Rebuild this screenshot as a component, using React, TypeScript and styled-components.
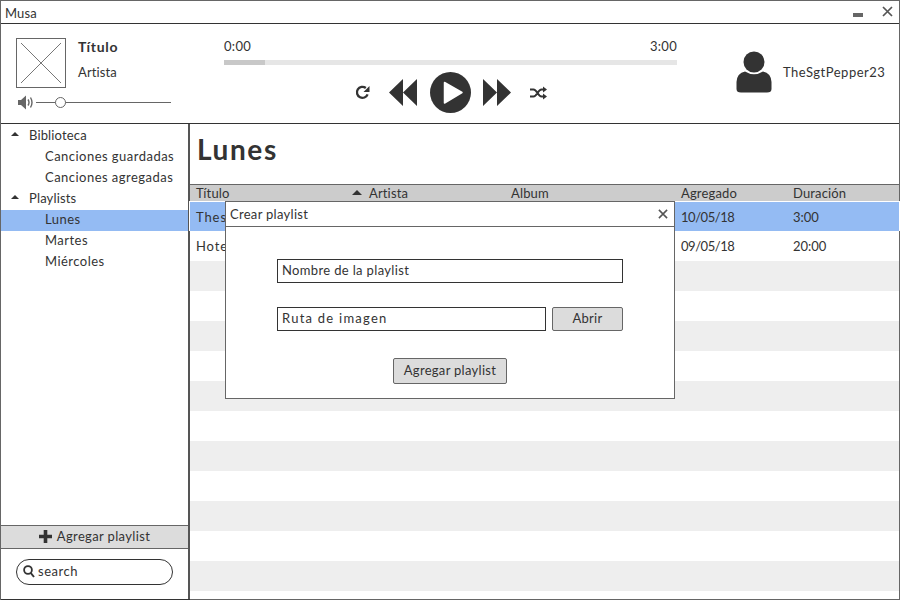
import styled, { createGlobalStyle } from "styled-components";

const GlobalStyle = createGlobalStyle`
  html, body {
    margin: 0;
    padding: 0;
    background: #fff;
  }
  * {
    box-sizing: border-box;
  }
`;

const Window = styled.div`
  width: 900px;
  height: 600px;
  position: relative;
  display: flex;
  flex-direction: column;
  border: 1px solid #666;
  font-family: "Lato", "Noto Sans", sans-serif;
  font-size: 13px;
  letter-spacing: 0.5px;
  color: #333;
  background: #fff;
`;

const TitleBar = styled.div`
  height: 23px;
  flex: none;
  display: flex;
  align-items: center;
  justify-content: space-between;
  padding: 2px 6px 0 4px;
  border-bottom: 1px solid #333;
`;

const AppName = styled.span`
  letter-spacing: 0.1px;
`;

const WindowActions = styled.div`
  display: flex;
  align-items: flex-start;
  gap: 19px;
  margin-top: -3px;
`;

const Minimize = styled.div`
  width: 10px;
  height: 4px;
  margin-top: 7px;
  background: #666;
`;

const Player = styled.div`
  height: 100px;
  flex: none;
  display: flex;
  border-bottom: 1px solid #333;
`;

const TrackPanel = styled.div`
  width: 223px;
  flex: none;
  padding: 14px 0 0 15px;
`;

const TrackInfo = styled.div`
  display: flex;
  gap: 12px;
`;

const Cover = styled.svg`
  display: block;
  width: 50px;
  height: 50px;
`;

const TrackText = styled.div`
  display: flex;
  flex-direction: column;
  gap: 9px;
`;

const TrackTitle = styled.div`
  font-size: 14px;
  line-height: 17px;
  font-weight: 700;
  letter-spacing: 0.7px;
`;

const TrackArtist = styled.div`
  line-height: 16px;
  letter-spacing: 0.1px;
`;

const Volume = styled.div`
  display: flex;
  align-items: center;
  gap: 2px;
  margin: 7px 0 0 2px;
`;

const Slider = styled.div`
  position: relative;
  width: 135px;
  height: 1px;
  background: #666;
`;

const SliderKnob = styled.div`
  position: absolute;
  left: 19px;
  top: -5px;
  width: 11px;
  height: 11px;
  border-radius: 50%;
  border: 1px solid #666;
  background: #fff;
`;

const Transport = styled.div`
  width: 453px;
  flex: none;
  padding-top: 13px;
`;

const Times = styled.div`
  display: flex;
  justify-content: space-between;
  line-height: 18px;
  letter-spacing: 0.3px;
`;

const Progress = styled.div`
  height: 5px;
  margin-top: 5px;
  background: #e6e6e6;
`;

const ProgressFill = styled.div`
  height: 100%;
  background: #c8c8c8;
`;

const Controls = styled.div`
  display: flex;
  align-items: center;
  margin-top: 7px;
  padding-left: 131px;
  height: 41px;
`;

const ControlItem = styled.span<{ $after?: number }>`
  display: flex;
  margin-right: ${(props) => props.$after ?? 0}px;
`;

const UserPanel = styled.div`
  flex: 1;
  display: flex;
  align-items: center;
  gap: 11px;
  padding: 0 0 4px 59px;
`;

const UserName = styled.span`
  letter-spacing: 0.5px;
`;

const Body = styled.div`
  flex: 1;
  display: flex;
  min-height: 0;
`;

const Sidebar = styled.aside`
  width: 189px;
  flex: none;
  display: flex;
  flex-direction: column;
  border-right: 2px solid #555;
  box-shadow: 0 1px 0 #333;
`;

const Tree = styled.div`
  flex: 1;
  padding-top: 2px;
`;

type TreeRowProps = {
  $level: number;
  $selected?: boolean;
};

const TreeRow = styled.div<TreeRowProps>`
  height: 21px;
  display: flex;
  align-items: center;
  padding-left: ${(props) => (props.$level === 0 ? 10 : 44)}px;
  padding-bottom: 3px;
  letter-spacing: ${(props) => (props.$level === 0 ? 0.15 : 0.47)}px;
  background: ${(props) => (props.$selected ? "#94bbf3" : "transparent")};
`;

const Caret = styled.span`
  width: 0;
  height: 0;
  margin-right: 10px;
  margin-bottom: 2px;
  border-left: 4px solid transparent;
  border-right: 4px solid transparent;
  border-bottom: 4px solid #333;
`;

const AddButton = styled.div`
  height: 24px;
  flex: none;
  display: flex;
  align-items: center;
  justify-content: center;
  gap: 5px;
  padding-bottom: 2px;
  letter-spacing: 0.35px;
  background: #dcdcdc;
  border-top: 1px solid #666;
  border-bottom: 1px solid #666;
`;

const SearchArea = styled.div`
  height: 50px;
  flex: none;
  padding: 10px 15px 0;
`;

const SearchBox = styled.div`
  width: 157px;
  height: 26px;
  display: flex;
  align-items: center;
  gap: 3px;
  padding: 0 0 2px 6px;
  border: 1px solid #333;
  border-radius: 13px;
`;

const Main = styled.main`
  flex: 1;
  min-width: 0;
  display: flex;
  flex-direction: column;
`;

const PageTitle = styled.h1`
  height: 60px;
  flex: none;
  margin: 0;
  padding: 8px 0 0 7px;
  font-size: 28px;
  line-height: 34px;
  font-weight: 700;
  letter-spacing: 1.6px;
  color: #333;
`;

const TableHeader = styled.div`
  height: 17px;
  flex: none;
  display: grid;
  grid-template-columns: 156px 159px 170px 112px 1fr;
  align-items: center;
  padding-left: 6px;
  letter-spacing: 0.15px;
  background: #ccc;
  border-top: 1px solid #666;
`;

const HeaderCell = styled.div`
  display: flex;
  align-items: center;
  line-height: 16px;
`;

const SortCell = styled(HeaderCell)`
  gap: 7px;
`;

const HeaderCaret = styled(Caret)`
  margin: 0 0 2px;
  border-left-width: 5px;
  border-right-width: 5px;
  border-bottom-width: 5px;
`;

const Rows = styled.div`
  flex: 1;
`;

type TableRowProps = {
  $tone: "selected" | "plain" | "shade";
};

const rowColors = {
  selected: "#94bbf3",
  plain: "#fff",
  shade: "#eee",
};

const TableRow = styled.div<TableRowProps>`
  position: relative;
  height: 30px;
  display: grid;
  grid-template-columns: 485px 112px 1fr;
  align-items: center;
  padding-left: 6px;
  background: ${(props) => rowColors[props.$tone]};
  border-top: ${(props) => (props.$tone === "selected" ? "1px solid #fff" : "0")};
  box-shadow: ${(props) => (props.$tone === "selected" ? "-1px 0 0 #fff, 1px 0 0 #fff" : "none")};
`;

const SongCell = styled.span`
  letter-spacing: 0.9px;
`;

const DateCell = styled.span`
  letter-spacing: -0.45px;
`;

const TimeCell = styled.span`
  letter-spacing: 0;
`;

const Dialog = styled.div`
  position: absolute;
  left: 224px;
  top: 200px;
  width: 450px;
  height: 198px;
  display: flex;
  flex-direction: column;
  background: #fff;
  border: 1px solid #666;
`;

const DialogHeader = styled.div`
  height: 25px;
  flex: none;
  display: flex;
  align-items: center;
  justify-content: space-between;
  padding: 0 6px 0 4px;
  letter-spacing: 0.3px;
  border-bottom: 1px solid #666;
`;

const DialogBody = styled.div`
  flex: 1;
  display: flex;
  flex-direction: column;
  padding: 32px 51px 0;
`;

const Field = styled.div<{ $tracking: number }>`
  height: 24px;
  flex: 1;
  display: flex;
  align-items: center;
  padding: 0 0 2px 4px;
  letter-spacing: ${(props) => props.$tracking}px;
  border: 1px solid #333;
`;

const FieldRow = styled.div`
  display: flex;
  gap: 6px;
  height: 24px;
  margin-bottom: 24px;
`;

const Button = styled.div`
  height: 24px;
  display: flex;
  align-items: center;
  justify-content: center;
  padding-bottom: 2px;
  letter-spacing: 0.3px;
  background: #dcdcdc;
  border: 1px solid #666;
  border-radius: 2px;
`;

const OpenButton = styled(Button)`
  width: 71px;
  flex: none;
`;

const SubmitRow = styled.div`
  display: flex;
  justify-content: center;
  padding-top: 3px;
`;

const SubmitButton = styled(Button)`
  width: 114px;
  height: 26px;
`;

const emptyRows = Array.from({ length: 11 }, (_, i) => (i % 2 === 0 ? "shade" : "plain") as "shade" | "plain");

function CloseIcon({ size = 11 }: { size?: number }) {
  return (
    <svg width={size} height={size} viewBox="0 0 11 11">
      <path d="M1 1 L10 10 M10 1 L1 10" stroke="#555" strokeWidth="1.7" fill="none" />
    </svg>
  );
}

function SpeakerIcon() {
  return (
    <svg width="16" height="15" viewBox="0 0 16 15">
      <path d="M0 5 H3 L8 0.5 V14.5 L3 10 H0 Z" fill="#666" />
      <path d="M10 4.5 Q12 7.5 10 10.5 M12.5 2.5 Q15.5 7.5 12.5 12.5" stroke="#666" strokeWidth="1.4" fill="none" />
    </svg>
  );
}

function RepeatIcon() {
  return (
    <svg width="15" height="15" viewBox="0 0 15 15">
      <path d="M12.6 9.3 A5.5 5.5 0 1 1 10.8 3" stroke="#333" strokeWidth="2.3" fill="none" />
      <path d="M14.5 1 V7 H8.5 Z" fill="#333" />
    </svg>
  );
}

function RewindIcon() {
  return (
    <svg width="28" height="27" viewBox="0 0 28 27">
      <path d="M0 13.5 L14 0 V27 Z M14 13.5 L28 0 V27 Z" fill="#333" />
    </svg>
  );
}

function ForwardIcon() {
  return (
    <svg width="28" height="27" viewBox="0 0 28 27">
      <path d="M0 0 L14 13.5 L0 27 Z M14 0 L28 13.5 L14 27 Z" fill="#333" />
    </svg>
  );
}

function PlayIcon() {
  return (
    <svg width="41" height="41" viewBox="0 0 41 41">
      <circle cx="20.5" cy="20.5" r="20.5" fill="#333" />
      <path d="M14.5 10.5 V31 L32 20.5 Z" fill="#fff" stroke="#fff" strokeWidth="1.5" strokeLinejoin="round" />
    </svg>
  );
}

function ShuffleIcon() {
  return (
    <svg width="17" height="14" viewBox="0 0 17 14">
      <path d="M0 3.5 H3.5 C7 3.5 8 10.5 11.5 10.5 H13.5 M0 10.5 H3.5 C7 10.5 8 3.5 11.5 3.5 H13.5" stroke="#333" strokeWidth="2" fill="none" />
      <path d="M13 0.5 L17 3.5 L13 6.5 Z M13 7.5 L17 10.5 L13 13.5 Z" fill="#333" />
    </svg>
  );
}

function UserIcon() {
  return (
    <svg width="36" height="42" viewBox="0 0 36 42">
      <circle cx="18" cy="11" r="10.5" fill="#333" />
      <path d="M9 20.5 Q18 26 27 20.5 Q35 22 35.5 31 V38 Q35.5 41.5 31 41.5 H5 Q0.5 41.5 0.5 38 V31 Q1 22 9 20.5 Z" fill="#333" />
    </svg>
  );
}

function PlusIcon() {
  return (
    <svg width="13" height="13" viewBox="0 0 13 13">
      <path d="M4.7 0 H8.3 V4.7 H13 V8.3 H8.3 V13 H4.7 V8.3 H0 V4.7 H4.7 Z" fill="#333" />
    </svg>
  );
}

function SearchIcon() {
  return (
    <svg width="12" height="13" viewBox="0 0 12 13">
      <circle cx="5" cy="5" r="3.9" stroke="#333" strokeWidth="1.8" fill="none" />
      <path d="M7.8 8 L11 12" stroke="#333" strokeWidth="2" />
    </svg>
  );
}

function App() {
  return (
    <>
      <GlobalStyle />
      <Window>
        <TitleBar>
          <AppName>Musa</AppName>
          <WindowActions>
            <Minimize />
            <CloseIcon />
          </WindowActions>
        </TitleBar>

        <Player>
          <TrackPanel>
            <TrackInfo>
              <Cover viewBox="0 0 50 50">
                <rect x="0.5" y="0.5" width="49" height="49" fill="#fff" stroke="#666" />
                <path d="M5 5 L45 45 M45 5 L5 45" stroke="#777" strokeWidth="1" />
              </Cover>
              <TrackText>
                <TrackTitle>Título</TrackTitle>
                <TrackArtist>Artista</TrackArtist>
              </TrackText>
            </TrackInfo>
            <Volume>
              <SpeakerIcon />
              <Slider>
                <SliderKnob />
              </Slider>
            </Volume>
          </TrackPanel>

          <Transport>
            <Times>
              <span>0:00</span>
              <span>3:00</span>
            </Times>
            <Progress>
              <ProgressFill style={{ width: `${(41 / 453) * 100}%` }} />
            </Progress>
            <Controls>
              <ControlItem $after={19}>
                <RepeatIcon />
              </ControlItem>
              <ControlItem $after={13}>
                <RewindIcon />
              </ControlItem>
              <ControlItem $after={12}>
                <PlayIcon />
              </ControlItem>
              <ControlItem $after={19}>
                <ForwardIcon />
              </ControlItem>
              <ControlItem>
                <ShuffleIcon />
              </ControlItem>
            </Controls>
          </Transport>

          <UserPanel>
            <UserIcon />
            <UserName>TheSgtPepper23</UserName>
          </UserPanel>
        </Player>

        <Body>
          <Sidebar>
            <Tree>
              <TreeRow $level={0}>
                <Caret />
                Biblioteca
              </TreeRow>
              <TreeRow $level={1}>Canciones guardadas</TreeRow>
              <TreeRow $level={1}>Canciones agregadas</TreeRow>
              <TreeRow $level={0}>
                <Caret />
                Playlists
              </TreeRow>
              <TreeRow $level={1} $selected>
                Lunes
              </TreeRow>
              <TreeRow $level={1}>Martes</TreeRow>
              <TreeRow $level={1}>Miércoles</TreeRow>
            </Tree>
            <AddButton>
              <PlusIcon />
              Agregar playlist
            </AddButton>
            <SearchArea>
              <SearchBox>
                <SearchIcon />
                search
              </SearchBox>
            </SearchArea>
          </Sidebar>

          <Main>
            <PageTitle>Lunes</PageTitle>
            <TableHeader>
              <HeaderCell>Título</HeaderCell>
              <SortCell>
                <HeaderCaret />
                Artista
              </SortCell>
              <HeaderCell>Album</HeaderCell>
              <HeaderCell>Agregado</HeaderCell>
              <HeaderCell>Duración</HeaderCell>
            </TableHeader>
            <Rows>
              <TableRow $tone="selected">
                <SongCell>These</SongCell>
                <DateCell>10/05/18</DateCell>
                <TimeCell>3:00</TimeCell>
              </TableRow>
              <TableRow $tone="plain">
                <SongCell>Hotel</SongCell>
                <DateCell>09/05/18</DateCell>
                <TimeCell>20:00</TimeCell>
              </TableRow>
              {emptyRows.map((tone, i) => (
                <TableRow key={i} $tone={tone} />
              ))}
            </Rows>
          </Main>
        </Body>

        <Dialog>
          <DialogHeader>
            <span>Crear playlist</span>
            <CloseIcon size={10} />
          </DialogHeader>
          <DialogBody>
            <FieldRow>
              <Field $tracking={0.35}>Nombre de la playlist</Field>
            </FieldRow>
            <FieldRow>
              <Field $tracking={1.25}>Ruta de imagen</Field>
              <OpenButton>Abrir</OpenButton>
            </FieldRow>
            <SubmitRow>
              <SubmitButton>Agregar playlist</SubmitButton>
            </SubmitRow>
          </DialogBody>
        </Dialog>
      </Window>
    </>
  );
}

export default App;
